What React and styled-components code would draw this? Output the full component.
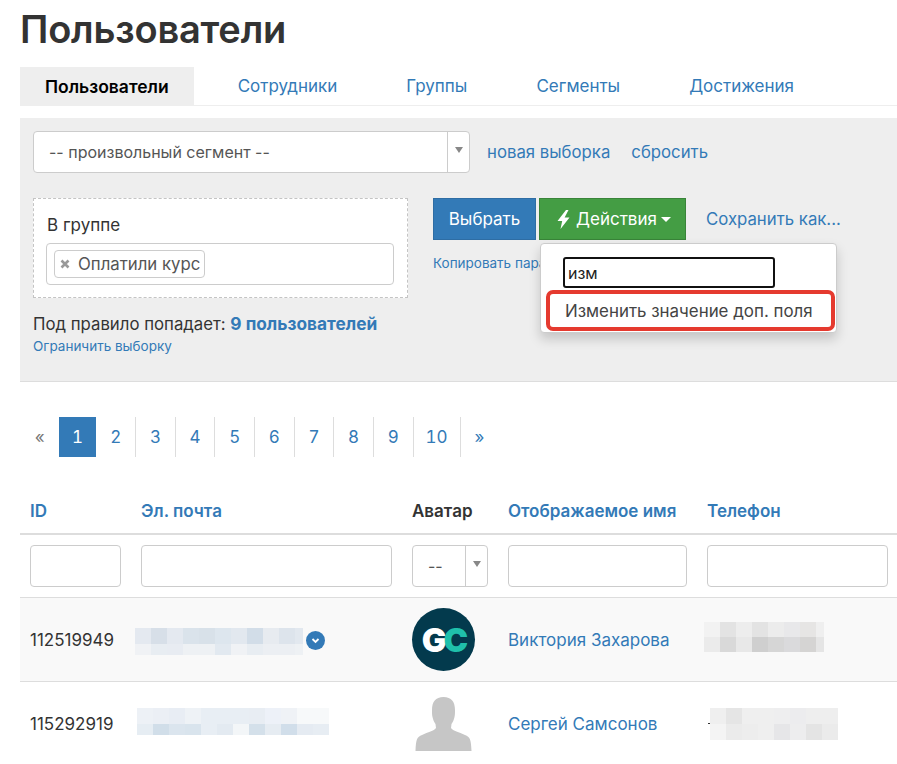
import React from 'react'
import styled, { createGlobalStyle } from 'styled-components'

const GlobalStyle = createGlobalStyle`
  html, body {
    margin: 0;
    height: 100%;
    overflow: hidden;
    background: #fff;
  }

  body {
    font-family: Inter, "Noto Sans", sans-serif;
    font-size: 17px;
    color: #333;
  }

  * {
    box-sizing: border-box;
  }
`

const Page = styled.div`
  width: 897px;
  height: 764px;
  padding-left: 20px;
  overflow: hidden;
`

const Title = styled.h1`
  margin: 0;
  padding-top: 8px;
  height: 67px;
  font-size: 38px;
  line-height: 42px;
  font-weight: 600;
  letter-spacing: -0.2px;
  color: #333;
`

const Tabs = styled.div`
  display: flex;
  height: 39px;
  gap: 19px;
  border-bottom: 1px solid #eee;
`

const Tab = styled.a`
  padding: 0 25px;
  height: 38px;
  display: flex;
  align-items: center;
  white-space: nowrap;
  color: ${({ $active }) => ($active ? '#000' : '#337ab7')};
  font-size: ${({ $active }) => ($active ? 17.5 : 17)}px;
  font-weight: ${({ $active }) => ($active ? 600 : 400)};
  background: ${({ $active }) => ($active ? '#eee' : 'transparent')};
`

const Panel = styled.div`
  margin-top: 12px;
  height: 264px;
  padding: 13px;
  background: #eee;
  border-bottom: 1px solid #ddd;
`

const SegmentRow = styled.div`
  display: flex;
  align-items: center;
  height: 42px;
`

const SelectBox = styled.div`
  display: flex;
  align-items: center;
  width: ${({ $width }) => $width}px;
  height: 42px;
  background: #fff;
  border: 1px solid #ccc;
  border-radius: 4px;
  color: #555;
  font-size: 16px;
`

const SelectValue = styled.div`
  flex: 1;
  padding-left: ${({ $pad }) => $pad}px;
  white-space: nowrap;
`

const SelectArrow = styled.div`
  display: flex;
  align-items: center;
  justify-content: center;
  width: 22px;
  height: 100%;
  border-left: 1px solid #ccc;

  &::after {
    content: '';
    border-style: solid;
    border-width: 6px 4px 0;
    border-color: #888 transparent transparent;
    margin-bottom: 4px;
  }
`

const PlainLink = styled.a`
  color: #337ab7;
  font-size: 16.75px;
  white-space: nowrap;
  margin-left: ${({ $left }) => $left || 0}px;
`

const FilterRow = styled.div`
  display: flex;
  margin-top: 25px;
`

const FilterLeft = styled.div`
  width: 400px;
`

const RuleBox = styled.div`
  width: 375px;
  height: 100px;
  padding: 16px 13px 0 12px;
  background: #fff;
  border: 1px dashed #c4c4c4;
`

const RuleLabel = styled.div`
  line-height: 20px;
  margin-bottom: 8px;
  padding-left: 1px;
`

const TagInput = styled.div`
  height: 42px;
  padding: 6px 7px;
  background: #fff;
  border: 1px solid #ccc;
  border-radius: 4px;
`

const Tag = styled.span`
  display: inline-flex;
  align-items: center;
  gap: 8px;
  height: 28px;
  padding: 0 4px 0 5px;
  border: 1px solid #ccc;
  border-radius: 4px;
  color: #555;
  font-size: 16.75px;
`

const Matches = styled.div`
  margin-top: 16px;
  font-size: 16.75px;
  line-height: 20px;
  white-space: nowrap;
`

const MatchCount = styled.a`
  color: #337ab7;
  font-size: 17.3px;
  font-weight: 700;
`

const SmallLink = styled.a`
  display: block;
  font-size: 13.5px;
  line-height: 18px;
  color: #337ab7;
  white-space: nowrap;
`

const LimitLink = styled(SmallLink)`
  margin-top: 3px;
`

const CopyLink = styled(SmallLink)`
  margin-top: 14px;
`

const ButtonRow = styled.div`
  display: flex;
  align-items: center;
  gap: 3px;
`

const DropdownWrap = styled.div`
  position: relative;
`

const Button = styled.button`
  display: flex;
  align-items: center;
  justify-content: center;
  height: 42px;
  width: ${({ $width }) => $width}px;
  padding: 0 0 0 ${({ $color }) => ($color === 'green' ? 3 : 0)}px;
  font: inherit;
  color: #fff;
  border: 1px solid ${({ $color }) => ($color === 'green' ? '#398439' : '#2e6da4')};
  background: ${({ $color }) => ($color === 'green' ? '#449d44' : '#337ab7')};
`

const Caret = styled.span`
  margin-left: 4px;
  border-style: solid;
  border-width: 5px 5px 0;
  border-color: #fff transparent transparent;
`

const Menu = styled.div`
  position: absolute;
  top: 45px;
  left: 1px;
  z-index: 5;
  width: 297px;
  height: 90px;
  padding: 13px 1px 0 5px;
  background: #fff;
  border: 1px solid #ccc;
  border-radius: 4px;
  box-shadow: 0 6px 12px rgba(0, 0, 0, 0.175);
`

const MenuSearch = styled.div`
  width: 212px;
  height: 31px;
  margin-left: 17px;
  padding-left: 3px;
  display: flex;
  align-items: center;
  border: 2px solid #111;
  border-radius: 3px;
  color: #222;
  font-size: 16px;
`

const MenuItem = styled.div`
  margin-top: 2px;
  height: 41px;
  padding-left: 15px;
  display: flex;
  align-items: center;
  border: 4px solid #e53a2f;
  border-radius: 7px;
  color: #444;
  white-space: nowrap;
  font-size: 16.9px;
`

const Pagination = styled.div`
  display: flex;
  height: 40px;
  margin-top: 35px;
  font-variant-numeric: tabular-nums;
`

const PageItem = styled.a`
  display: flex;
  align-items: center;
  padding: 0 ${({ $pad }) => $pad || 13.8}px;
  color: ${({ $active, $muted }) => ($active ? '#fff' : $muted ? '#777' : '#337ab7')};
  background: ${({ $active }) => ($active ? '#337ab7' : 'transparent')};
  border-left: 1px solid ${({ $plain }) => ($plain ? 'transparent' : '#ddd')};
`

const Table = styled.table`
  width: 878px;
  margin-top: 33px;
  table-layout: fixed;
  border-collapse: collapse;
`

const Th = styled.th`
  height: 44px;
  padding: 0 10px 2px;
  text-align: left;
  font-weight: 600;
  white-space: nowrap;
  color: ${({ $plain }) => ($plain ? '#333' : '#337ab7')};
  border-bottom: 2px solid #ddd;
`

const FilterCell = styled.td`
  height: 63px;
  padding: 10px;
  border-bottom: 1px solid #ddd;
`

const FilterInput = styled.div`
  height: 42px;
  background: #fff;
  border: 1px solid #ccc;
  border-radius: 4px;
`

const Row = styled.tr`
  background: ${({ $striped }) => ($striped ? '#f9f9f9' : '#fff')};
`

const Td = styled.td`
  height: 84px;
  padding: 0 10px;
  vertical-align: middle;
  white-space: nowrap;
  border-bottom: 1px solid #ddd;
`

const AvatarCell = styled(Td)`
  padding: 0 0 0 10px;
`

const NameLink = styled.a`
  color: #337ab7;
`

const EmailWrap = styled.div`
  display: flex;
  align-items: center;
  gap: 3px;
  margin-left: ${({ $left }) => $left}px;
  transform: translateY(${({ $shift }) => $shift}px);
`

const BlurRows = styled.div`
  display: flex;
  flex-direction: column;
  width: ${({ $width }) => $width}px;
  overflow: hidden;
`

const BlurRow = styled.div`
  display: flex;
  height: ${({ $height }) => $height}px;
`

const BlurBlock = styled.div`
  flex: 0 0 16px;
  background: ${({ $color }) => $color};
`

const ExpandBadge = styled.span`
  display: flex;
  align-items: center;
  justify-content: center;
  width: 19px;
  height: 19px;
  border-radius: 50%;
  background: #337ab7;
  margin-top: -2px;
`

const LogoAvatar = styled.div`
  width: 63px;
  height: 63px;
  border-radius: 50%;
  background: #033a4d;
  display: flex;
  align-items: center;
  justify-content: center;
  font-weight: 900;
  font-size: 33px;
  letter-spacing: -3px;
  color: #fff;
`

const LogoAccent = styled.span`
  color: #1fc0ab;
`

const PhoneIndent = styled.div`
  display: flex;
  align-items: center;
  margin-left: ${({ $left }) => $left}px;
  transform: translateY(${({ $shift }) => $shift}px);
`

const PhoneDash = styled.span`
  width: 2px;
  height: 1px;
  background: #333;
  margin-left: -2px;
`

function Blur({ width, heights, rows }) {
  return (
    <BlurRows $width={width}>
      {rows.map((row, i) => (
        <BlurRow key={i} $height={heights[i]}>
          {row.map((color, j) => (
            <BlurBlock key={j} $color={color} />
          ))}
        </BlurRow>
      ))}
    </BlurRows>
  )
}

const Select = ({ width, pad, children }) => (
  <SelectBox $width={width}>
    <SelectValue $pad={pad}>{children}</SelectValue>
    <SelectArrow />
  </SelectBox>
)

const BoltIcon = () => (
  <svg width='13' height='19' viewBox='0 0 13 19' style={{ marginRight: 6 }}>
    <path d='M9 0 .5 11h4.700L3.500 19 12.500 7.500H7.600L11.500 0z' fill='#fff' />
  </svg>
)

const ChevronIcon = () => (
  <svg width='11' height='11' viewBox='0 0 11 11'>
    <path d='M2.500 4 5.500 7 8.500 4' fill='none' stroke='#fff' strokeWidth='1.800' />
  </svg>
)

const RemoveIcon = () => (
  <svg width='10' height='10' viewBox='0 0 10 10'>
    <path d='M1.500 1.500 8.500 8.500M8.500 1.500 1.500 8.500' fill='none' stroke='#999' strokeWidth='2.600' />
  </svg>
)

const UserSilhouette = () => (
  <svg width='57' height='54' viewBox='0 0 57 54' style={{ display: 'block', marginLeft: 3 }}>
    <path
      d='M28.500 0c8 0 11.500 5 11.500 13 0 3 0 5-.5 7-.5 2-1 4-3 7l-.5 4c2 3 8 4 14 7 5 2 6 4 6.500 16H.5c.5-12 1.500-14 6.500-16 6-3 12-4 14-7l-.5-4c-2-3-2.500-5-3-7-.5-2-.5-4-.5-7 0-8 3.500-13 11.500-13z'
      fill='#c6c6c6'
    />
  </svg>
)

const tabs = ['Сотрудники', 'Группы', 'Сегменты', 'Достижения']
const pages = ['3', '4', '5', '6', '7', '8', '9']

const email1 = [
  ['#e4e9f0', '#d7dfe8', '#e4e9f0', '#dae3eb', '#d8e1e9', '#dde6ee', '#e2e8ef', '#d2dde8', '#e7ebf0', '#dde4ec', '#e2e8ef'],
  ['#f0f2f5', '#e8edf2', '#e8ecf2', '#eef1f4', '#eef1f4', '#e2e9f0', '#f0f2f5', '#e8edf2', '#eceff3', '#eceff3', '#eef1f4'],
]
const email2 = [
  ['#edf1f6', '#ebeff5', '#e8edf4', '#eef2f6', '#e8eef4', '#e8eef4', '#e8eef4', '#e8edf3', '#edf1f8', '#eff2f6', '#f7f9fa', '#f7f9fa'],
  ['#e6edf3', '#d1dee9', '#dbe5ee', '#d9e4ed', '#e8eef4', '#e3eaf1', '#f3f6f8', '#d4e0ea', '#e6ecf2', '#d1deea', '#e5ebf2', '#e7edf3'],
]
const phone1 = [
  ['#f2f2f2', '#e3e3e3', '#ededed', '#e3e3e3', '#ececec', '#e8e8ea', '#e6e5e4', '#efefef'],
  ['#ebebeb', '#d9d9d9', '#e8e8e8', '#cfcfcf', '#d6d6d6', '#dadadc', '#d5d4d3', '#e5e5e5'],
]
const phone2 = [
  ['#efefef', '#e5e5e5', '#efefef', '#efefef', '#eeeeef', '#ececee', '#eeeeee', '#eeeeee'],
  ['#f4f4f4', '#ebebeb', '#ededed', '#efefef', '#e6e6e8', '#ededee', '#e4e4e4', '#ebebeb'],
]

export default function App() {
  return (
    <Page>
      <GlobalStyle />
      <Title>Пользователи</Title>
      <Tabs>
        <Tab $active>Пользователи</Tab>
        {tabs.map(tab => (
          <Tab key={tab}>{tab}</Tab>
        ))}
      </Tabs>

      <Panel>
        <SegmentRow>
          <Select width={437} pad={15}>-- произвольный сегмент --</Select>
          <PlainLink $left={17}>новая выборка</PlainLink>
          <PlainLink $left={21}>сбросить</PlainLink>
        </SegmentRow>
        <FilterRow>
          <FilterLeft>
            <RuleBox>
              <RuleLabel>В группе</RuleLabel>
              <TagInput>
                <Tag>
                  <RemoveIcon />
                  Оплатили курс
                </Tag>
              </TagInput>
            </RuleBox>
            <Matches>
              Под правило попадает: <MatchCount>9 пользователей</MatchCount>
            </Matches>
            <LimitLink>Ограничить выборку</LimitLink>
          </FilterLeft>
          <div>
            <ButtonRow>
              <Button $width={103}>Выбрать</Button>
              <DropdownWrap>
                <Button $color='green' $width={147}>
                  <BoltIcon />
                  Действия
                  <Caret />
                </Button>
                <Menu>
                  <MenuSearch>изм</MenuSearch>
                  <MenuItem>Изменить значение доп. поля</MenuItem>
                </Menu>
              </DropdownWrap>
              <PlainLink $left={17}>Сохранить как...</PlainLink>
            </ButtonRow>
            <CopyLink>Копировать пара</CopyLink>
          </div>
        </FilterRow>
      </Panel>

      <Pagination>
        <PageItem $muted $plain>«</PageItem>
        <PageItem $active $plain $pad={12.5}>1</PageItem>
        <PageItem $plain>2</PageItem>
        {pages.map(page => (
          <PageItem key={page}>{page}</PageItem>
        ))}
        <PageItem $pad={12}>10</PageItem>
        <PageItem>»</PageItem>
      </Pagination>

      <Table>
        <colgroup>
          <col width='111' />
          <col width='271' />
          <col width='96' />
          <col width='199' />
          <col width='201' />
        </colgroup>
        <thead>
          <tr>
            <Th>ID</Th>
            <Th>Эл. почта</Th>
            <Th $plain>Аватар</Th>
            <Th>Отображаемое имя</Th>
            <Th>Телефон</Th>
          </tr>
        </thead>
        <tbody>
          <tr>
            <FilterCell><FilterInput /></FilterCell>
            <FilterCell><FilterInput /></FilterCell>
            <FilterCell><Select width={76} pad={15}>--</Select></FilterCell>
            <FilterCell><FilterInput /></FilterCell>
            <FilterCell><FilterInput /></FilterCell>
          </tr>
          <Row $striped>
            <Td>112519949</Td>
            <Td>
              <EmailWrap $left={-6} $shift={2}>
                <Blur width={168} heights={[16, 11]} rows={email1} />
                <ExpandBadge><ChevronIcon /></ExpandBadge>
              </EmailWrap>
            </Td>
            <AvatarCell><LogoAvatar>G<LogoAccent>C</LogoAccent></LogoAvatar></AvatarCell>
            <Td><NameLink>Виктория Захарова</NameLink></Td>
            <Td>
              <PhoneIndent $left={-3} $shift={-3}>
                <Blur width={120} heights={[15, 15]} rows={phone1} />
              </PhoneIndent>
            </Td>
          </Row>
          <Row>
            <Td>115292919</Td>
            <Td>
              <EmailWrap $left={-4} $shift={-2}>
                <Blur width={192} heights={[16, 11]} rows={email2} />
              </EmailWrap>
            </Td>
            <AvatarCell><UserSilhouette /></AvatarCell>
            <Td><NameLink>Сергей Самсонов</NameLink></Td>
            <Td>
              <PhoneIndent $left={3} $shift={0}>
                <PhoneDash />
                <Blur width={128} heights={[16, 16]} rows={phone2} />
              </PhoneIndent>
            </Td>
          </Row>
        </tbody>
      </Table>
    </Page>
  )
}
